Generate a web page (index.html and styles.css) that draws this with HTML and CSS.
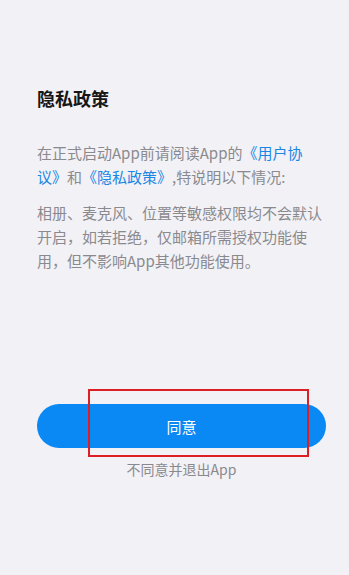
FILE: index.html
```html
<!DOCTYPE html>
<html>
<head>
<meta charset="utf-8">
<link rel="stylesheet" href="styles.css">
</head>
<body>
<main class="page">
  <h1 class="title">隐私政策</h1>
  <p class="text">在正式启动App前请阅读App的<a class="link">《用户协议》</a>和<a class="link">《隐私政策》</a>,特说明以下情况:</p>
  <p class="text">相册、麦克风、位置等敏感权限均不会默认开启，如若拒绝，仅邮箱所需授权功能使用，但不影响App其他功能使用。</p>
  <div class="actions">
    <div class="btn-wrap">
      <button class="agree">同意</button>
      <div class="highlight"></div>
    </div>
    <div class="decline">不同意并退出App</div>
  </div>
</main>
</body>
</html>
```
FILE: styles.css
```css
html, body {
  margin: 0;
  padding: 0;
  background: #f2f1f6;
}
body {
  font-family: "Noto Sans CJK SC", "Noto Sans", sans-serif;
}
.page {
  width: 349px;
  height: 575px;
  box-sizing: border-box;
  padding: 86px 23px 0 37px;
  display: flex;
  flex-direction: column;
}
.title {
  margin: 0;
  font-size: 18px;
  line-height: 24px;
  font-weight: 700;
  color: #161616;
}
.text {
  margin: 0;
  font-size: 15px;
  line-height: 24px;
  color: #8a8a8e;
  line-break: normal;
  text-spacing-trim: space-all;
}
.title + .text {
  margin-top: 31px;
}
.text + .text {
  margin-top: 12px;
}
.link {
  color: #1a87e3;
  text-decoration: none;
}
.actions {
  margin-top: 131px;
  display: flex;
  flex-direction: column;
  align-items: center;
}
.btn-wrap {
  position: relative;
  width: 100%;
}
.agree {
  display: block;
  width: 100%;
  height: 44px;
  border: none;
  border-radius: 22px;
  background: #0a88f3;
  color: #ffffff;
  font-family: inherit;
  font-size: 15px;
  padding: 0;
}
.highlight {
  position: absolute;
  left: 51px;
  top: -15px;
  width: 217px;
  height: 64px;
  border: 2px solid #dc1f26;
}
.decline {
  margin-top: 11px;
  font-size: 14px;
  line-height: 20px;
  color: #8a8a8e;
}
```
